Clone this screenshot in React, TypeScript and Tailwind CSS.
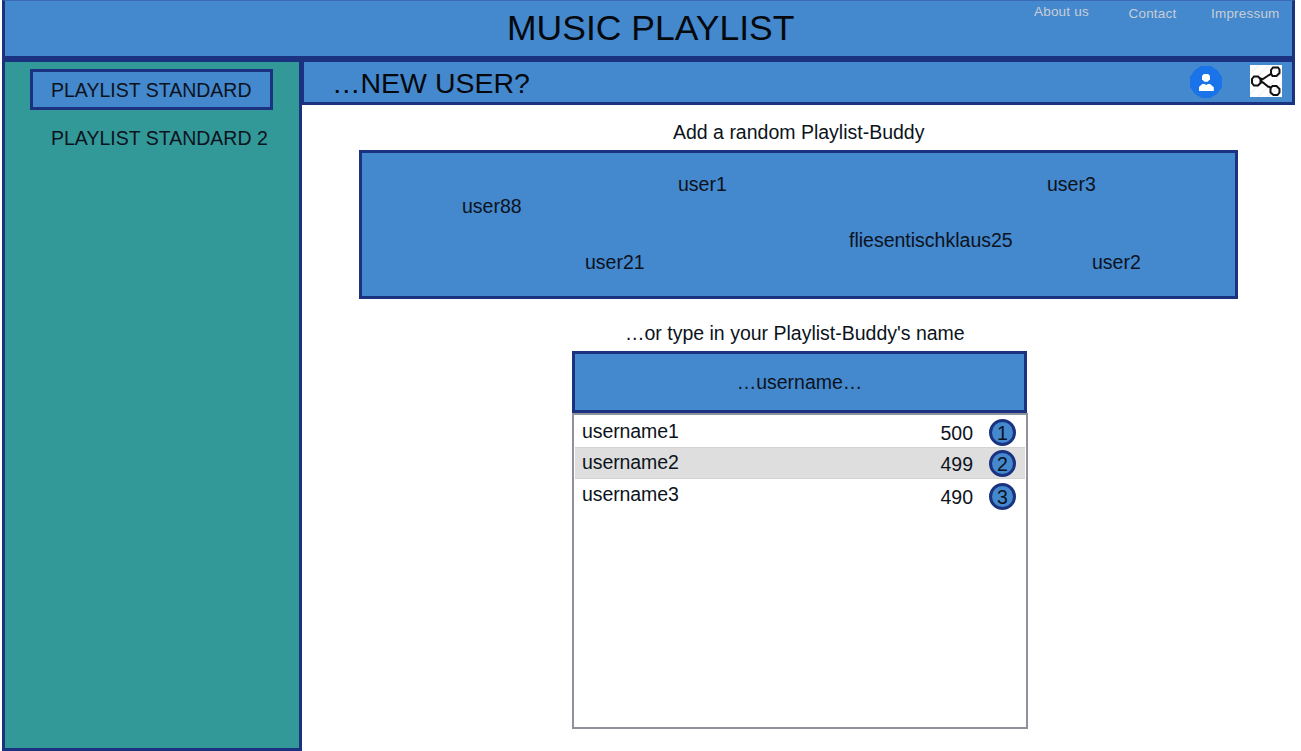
import React from "react";

const buddies = [
  { name: "user1", place: "left-[316px] top-[19px]" },
  { name: "user3", place: "left-[685px] top-[19px]" },
  { name: "user88", place: "left-[100px] top-[41px]" },
  { name: "fliesentischklaus25", place: "left-[487px] top-[75px]" },
  { name: "user21", place: "left-[223px] top-[97px]" },
  { name: "user2", place: "left-[730px] top-[97px]" },
];

const ranking = [
  { name: "username1", score: 500, row: "h-[32px] pt-[4px]", right: "pt-0" },
  { name: "username2", score: 499, row: "h-[32px] bg-[#dedede] border-y border-[#d3d3d3] pt-[2px]", right: "pt-0" },
  { name: "username3", score: 490, row: "h-[32px] pt-[3px]", right: "pt-[1px]" },
];

function UserIcon() {
  return (
    <svg className="h-8 w-8 shrink-0" viewBox="0 0 32 32">
      <path d="M11 0.5H21L27 4.5L31.5 11V21L27 27.5L20 31.5H12L5 27.5L0.5 21V11L5 4.5Z" fill="#1a73e8" stroke="#1a73e8" strokeLinejoin="round" />
      <path d="M13.8 8h4.4l1.8 2v3.2l-2.4 2.6h-3.2L12 13.2V10z" fill="#fff" />
      <path d="M9 25v-4l3.2-3h2.2l1.8 1 1.8-1h2l3.8 3.3V25z" fill="#fff" />
    </svg>
  );
}

function ShareIcon() {
  return (
    <svg className="h-8 w-8 shrink-0" viewBox="0 0 32 32">
      <path d="M0 0h32v32H0z" fill="#fff" />
      <path d="M0 9L9 0M0 19L19 0M0 29L29 0M8 32L32 8M18 32L32 18" stroke="#f3f3f3" strokeWidth="1.5" />
      <g fill="none" stroke="#111" strokeWidth="2">
        <path d="M4 11.5h4l2.5 2.5v4L8 20.5H4L2 18v-4z" />
        <path d="M23 2.5h5l1.5 2v3.5l-3 3h-4l-1.5-2.5V5z" />
        <path d="M22.5 21h4l3 3v3.5l-2 2.5h-4L20.500 27.500v-4z" />
        <path d="M9.500 13.500l3.500 .5 6-4 2-1M10 17l3 .5 5 4 3 1" />
        <path d="M11.500 13v5" />
      </g>
    </svg>
  );
}

export default function App() {
  return (
    <div className="flex h-[751px] w-[1301px] flex-col overflow-hidden bg-white pl-[2px] font-['Liberation_Sans',Arial,sans-serif] text-[19.5px] leading-6 text-[#0c1320]">
      <header className="flex h-[59px] w-[1293px] shrink-0 border-x-[3px] border-b-[3px] border-t border-[#1b3281] border-t-[#3a6cb5] bg-[#4488cd]">
        <h1 className="ml-[502px] mt-[7px] w-[527px] whitespace-nowrap text-[35.5px] leading-[40px] text-[#05080d]">MUSIC PLAYLIST</h1>
        <nav className="flex whitespace-nowrap text-[13.5px] leading-4 text-[#c9ced6]">
          <a className="mt-[3px] w-[94.500px] tracking-[0.2px]">About us</a>
          <a className="mt-[4.500px] w-[82.500px] tracking-[0.2px]">Contact</a>
          <a className="mt-[4.500px] tracking-[0.2px]">Impressum</a>
        </nav>
      </header>
      <div className="flex min-h-0 flex-1">
        <aside className="flex w-[300px] shrink-0 flex-col border-[3px] border-[#1b3281] bg-[#339998] pl-[25px] pt-[7px]">
          <button className="flex h-[41px] w-[243px] items-center whitespace-nowrap border-[3px] border-[#1b3281] bg-[#4488cd] pl-[18px]">PLAYLIST STANDARD</button>
          <div className="mt-[16px] whitespace-nowrap pl-[21px]">PLAYLIST STANDARD 2</div>
        </aside>
        <main className="flex min-w-0 flex-1 flex-col">
          <div className="-ml-px flex h-[46px] w-[994px] shrink-0 items-start border-[3px] border-[#1b3281] bg-[#4488cd]">
            <h2 className="ml-[28px] mt-[5px] flex-1 whitespace-nowrap text-[28.5px] leading-8 text-[#05080d]">…NEW USER?</h2>
            <div className="mr-[10px] mt-[3px] flex items-start gap-[28px]">
              <div className="pt-[1px]"><UserIcon /></div>
              <ShareIcon />
            </div>
          </div>
          <h3 className="ml-[371px] mt-[15px] whitespace-nowrap">Add a random Playlist-Buddy</h3>
          <section className="relative ml-[57px] mt-[6px] h-[149px] w-[879px] shrink-0 border-[3px] border-[#1b3281] bg-[#4488cd]">
            {buddies.map((b) => (
              <span key={b.name} className={`absolute whitespace-nowrap ${b.place}`}>{b.name}</span>
            ))}
          </section>
          <h3 className="ml-[323px] mt-[22px] whitespace-nowrap">…or type in your Playlist-Buddy's name</h3>
          <div className="ml-[270px] mt-[6px] flex h-[62px] w-[455px] shrink-0 items-center justify-center border-[3px] border-[#1b3281] bg-[#4488cd]">…username…</div>
          <div className="ml-[270px] h-[316px] w-[456px] shrink-0 border-2 border-[#8f929b] px-px">
            {ranking.map((r) => (
              <div key={r.name} className={`flex items-start justify-between pl-[7px] pr-[9px] ${r.row}`}>
                <span className="tracking-[-0.1px]">{r.name}</span>
                <div className={`flex items-center ${r.right}`}>
                  <span className="mr-[16px]">{r.score}</span>
                  <span className="flex h-[27px] w-[27px] items-center justify-center rounded-full border-[3px] border-[#1b3281] bg-[#4488cd]">{r.name.slice(-1)}</span>
                </div>
              </div>
            ))}
          </div>
        </main>
      </div>
    </div>
  );
}
